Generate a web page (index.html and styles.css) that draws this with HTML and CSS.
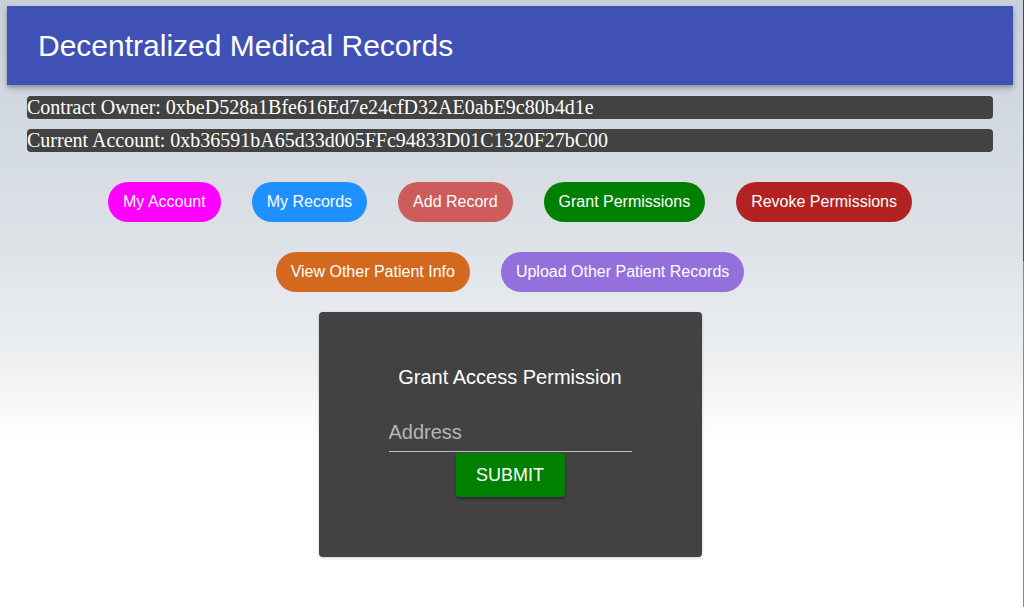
FILE: index.html
```html
<!DOCTYPE html>
<html>
<head>
<meta charset="utf-8">
<link rel="stylesheet" href="styles.css">
</head>
<body>
<div class="page">
  <header class="appbar">
    <h1 class="title">Decentralized Medical Records</h1>
  </header>
  <div class="info-list">
    <div class="info">Contract Owner: 0xbeD528a1Bfe616Ed7e24cfD32AE0abE9c80b4d1e</div>
    <div class="info">Current Account: 0xb36591bA65d33d005FFc94833D01C1320F27bC00</div>
  </div>
  <nav class="nav">
    <div class="nav-row">
      <button class="pill pill-magenta">My Account</button>
      <button class="pill pill-blue">My Records</button>
      <button class="pill pill-indian">Add Record</button>
      <button class="pill pill-green">Grant Permissions</button>
      <button class="pill pill-fire">Revoke Permissions</button>
    </div>
    <div class="nav-row">
      <button class="pill pill-choc">View Other Patient Info</button>
      <button class="pill pill-purple">Upload Other Patient Records</button>
    </div>
  </nav>
  <section class="card">
    <h2 class="card-title">Grant Access Permission</h2>
    <input class="field" type="text" placeholder="Address">
    <button class="submit">SUBMIT</button>
  </section>
</div>
<div class="edge"></div>
</body>
</html>
```
FILE: styles.css
```css
html, body {
  margin: 0;
  padding: 0;
  height: 100%;
}
body {
  background: linear-gradient(to bottom, #c8d0da 0%, #dde2e7 40%, #eef0f2 60%, #ffffff 73%, #ffffff 100%);
  font-family: "Liberation Sans", Arial, sans-serif;
  overflow: hidden;
}
.page {
  width: 1020px;
  padding-top: 6px;
  display: flex;
  flex-direction: column;
  align-items: center;
}
.appbar {
  width: 1006px;
  height: 79px;
  background: #3f51b5;
  box-shadow: 0 2px 4px rgba(0,0,0,0.25), 0 4px 6px rgba(0,0,0,0.12);
  display: flex;
  align-items: center;
  box-sizing: border-box;
  padding-left: 31px;
}
.title {
  margin: 0;
  color: #fff;
  font-weight: 400;
  font-size: 30px;
  padding-top: 1px;
}
.info-list {
  width: 966px;
  margin-top: 11px;
  display: flex;
  flex-direction: column;
  gap: 10px;
}
.info {
  background: #424242;
  color: #fff;
  border-radius: 4px;
  font-family: "Liberation Serif", "Times New Roman", serif;
  font-size: 20px;
  height: 23px;
  line-height: 23px;
  white-space: nowrap;
  overflow: hidden;
}
.nav {
  margin-top: 15px;
  display: flex;
  flex-direction: column;
}
.nav-row {
  display: flex;
  justify-content: center;
  margin: 15px 0;
  gap: 31px;
}
.nav-row + .nav-row {
  margin-top: 15px;
}
.pill {
  border: none;
  height: 40px;
  border-radius: 20px;
  padding: 0 15px;
  color: #fff;
  font-family: "Liberation Sans", Arial, sans-serif;
  font-size: 16px;
}
.pill-magenta { background: #ff00ff; }
.pill-blue { background: #1e90ff; }
.pill-indian { background: #cd5c5c; }
.pill-green { background: #008000; }
.pill-fire { background: #b22222; }
.pill-choc { background: #d2691e; }
.pill-purple { background: #9370db; }
.card {
  margin-top: 5px;
  width: 383px;
  height: 245px;
  box-sizing: border-box;
  background: #424242;
  border-radius: 4px;
  box-shadow: 0 1px 3px rgba(0,0,0,0.2);
  display: flex;
  flex-direction: column;
  align-items: center;
  padding-top: 53px;
}
.card-title {
  margin: 0;
  color: #fff;
  font-weight: 400;
  font-size: 20px;
  line-height: 24px;
}
.field {
  margin-top: 28px;
  width: 243px;
  box-sizing: border-box;
  background: transparent;
  border: none;
  border-bottom: 1px solid #bdbdbd;
  color: #fff;
  font-family: "Liberation Sans", Arial, sans-serif;
  font-size: 20px;
  padding: 4px 0 7px;
  outline: none;
}
.field::placeholder {
  color: #b5b5b5;
}
.submit {
  margin-top: 1px;
  width: 109px;
  height: 44px;
  border: none;
  border-radius: 4px;
  background: #008000;
  color: #fff;
  font-family: "Liberation Sans", Arial, sans-serif;
  font-size: 18px;
  box-shadow: 0 2px 3px rgba(0,0,0,0.35);
}
.edge {
  position: fixed;
  top: 0;
  right: 0;
  width: 1px;
  height: 100%;
  background: linear-gradient(to bottom, #4a4a4a 0%, #4a4a4a 43%, #8a8a8a 43%, #8a8a8a 100%);
}
```
